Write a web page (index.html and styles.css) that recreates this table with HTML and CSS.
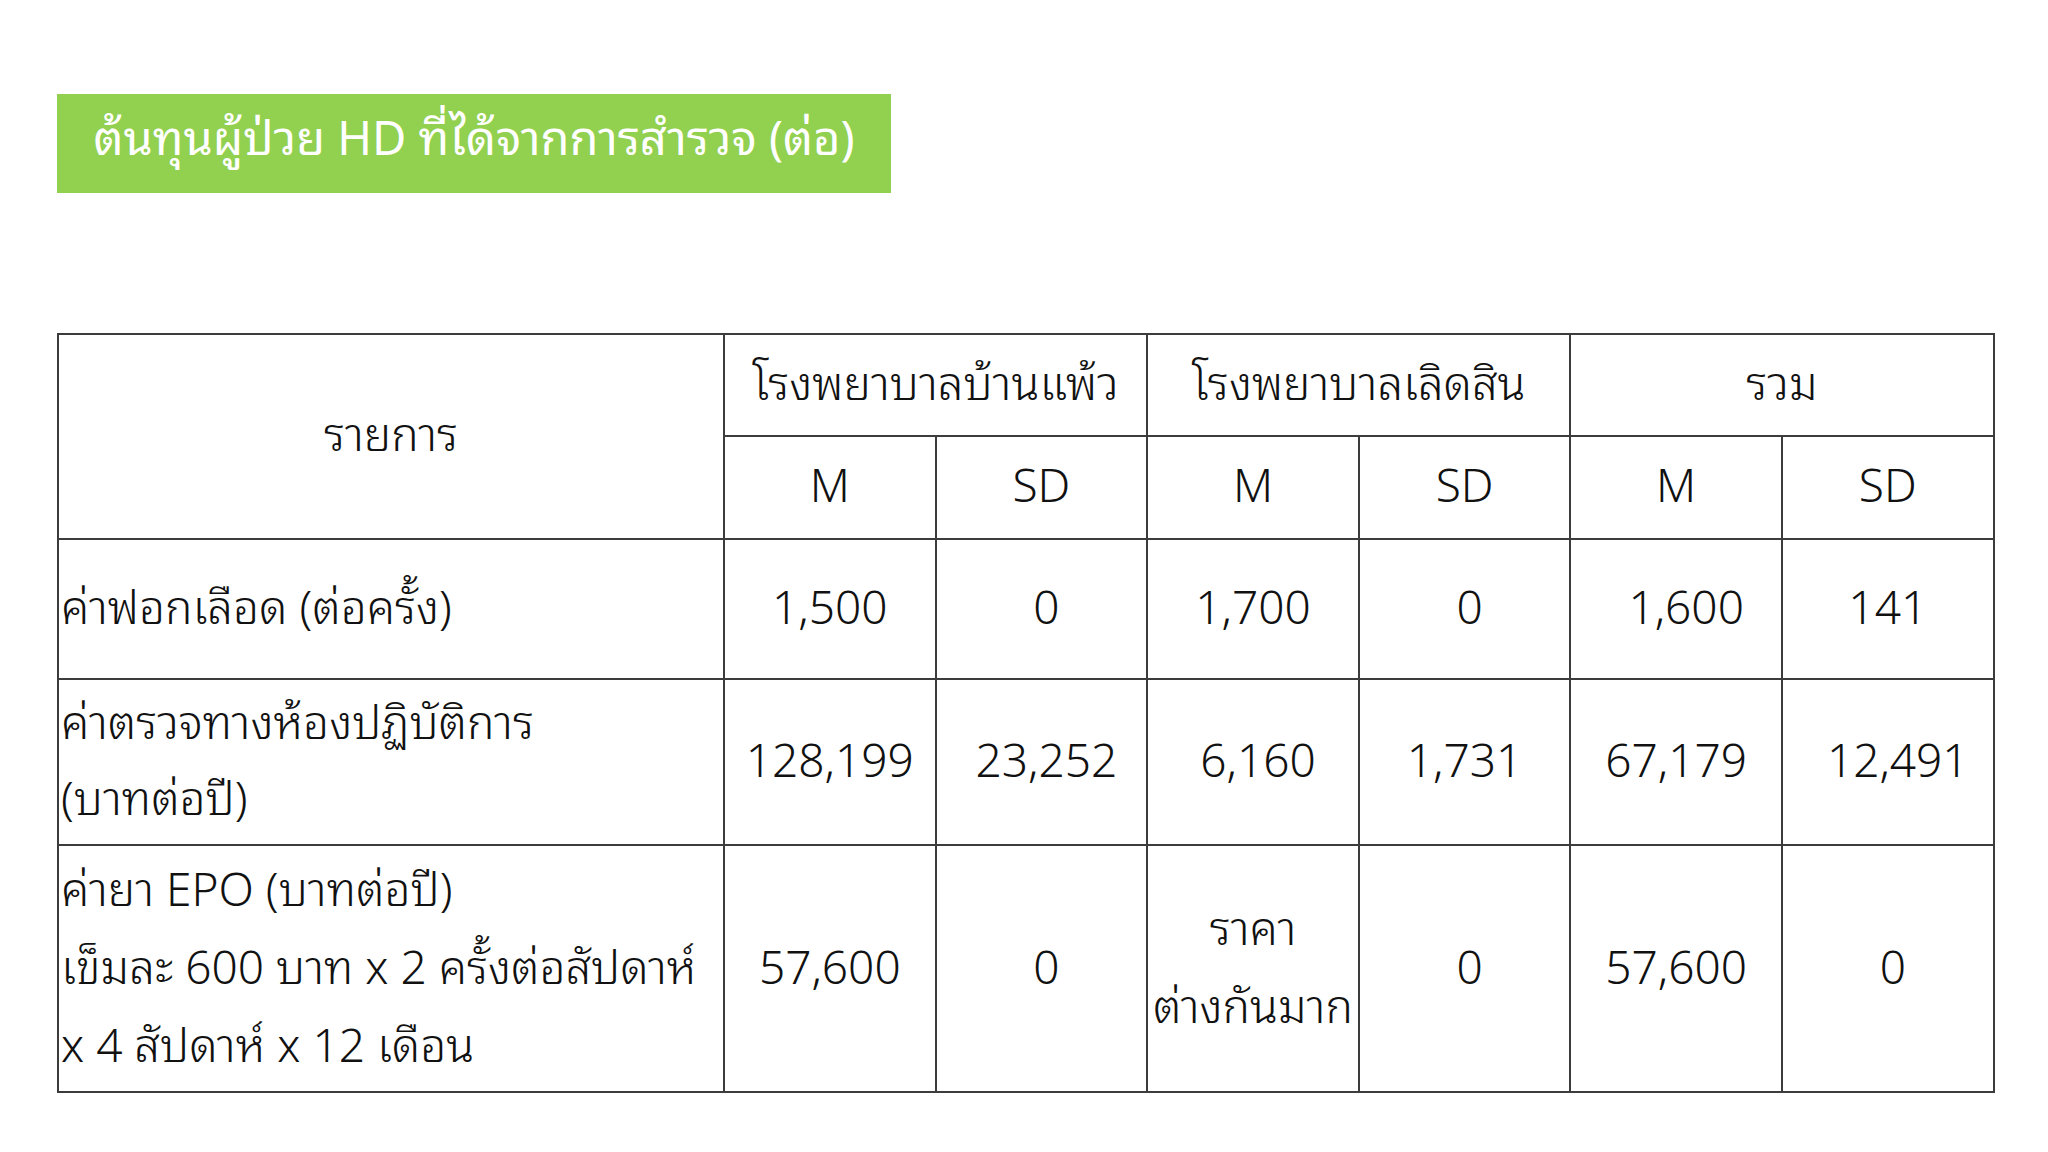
FILE: index.html
```html
<!DOCTYPE html>
<html lang="th">
<head>
<meta charset="utf-8">
<title>ต้นทุนผู้ป่วย HD ที่ได้จากการสำรวจ (ต่อ)</title>
<link rel="stylesheet" href="styles.css">
</head>
<body>
<div class="slide">
  <div class="title">ต้นทุนผู้ป่วย HD ที่ได้จากการสำรวจ (ต่อ)</div>
  <table class="cost">
    <colgroup>
      <col class="c-item">
      <col class="c-val"><col class="c-val"><col class="c-val"><col class="c-val"><col class="c-val"><col class="c-val">
    </colgroup>
    <tr class="r-h1">
      <td rowspan="2" class="center">รายการ</td>
      <td colspan="2" class="center">โรงพยาบาลบ้านแพ้ว</td>
      <td colspan="2" class="center">โรงพยาบาลเลิดสิน</td>
      <td colspan="2" class="center">รวม</td>
    </tr>
    <tr class="r-h2">
      <td class="center">M</td><td class="center">SD</td>
      <td class="center">M</td><td class="center">SD</td>
      <td class="center">M</td><td class="center">SD</td>
    </tr>
    <tr class="r-1">
      <td class="item">ค่าฟอกเลือด (ต่อครั้ง)</td>
      <td class="center">1,500</td>
      <td class="center nudge">0</td>
      <td class="center">1,700</td>
      <td class="center nudge">0</td>
      <td class="center nudge2">1,600</td>
      <td class="center">141</td>
    </tr>
    <tr class="r-2">
      <td class="item">ค่าตรวจทางห้องปฏิบัติการ<br>(บาทต่อปี)</td>
      <td class="center">128,199</td>
      <td class="center nudge">23,252</td>
      <td class="center nudge">6,160</td>
      <td class="center">1,731</td>
      <td class="center">67,179</td>
      <td class="center nudge2">12,491</td>
    </tr>
    <tr class="r-3">
      <td class="item">ค่ายา EPO (บาทต่อปี)<br>เข็มละ 600 บาท x 2 ครั้งต่อสัปดาห์<br>x 4 สัปดาห์ x 12 เดือน</td>
      <td class="center">57,600</td>
      <td class="center nudge">0</td>
      <td class="center">ราคา<br>ต่างกันมาก</td>
      <td class="center nudge">0</td>
      <td class="center">57,600</td>
      <td class="center nudge">0</td>
    </tr>
  </table>
</div>
</body>
</html>
```

FILE: styles.css
```css
html, body {
  margin: 0;
  padding: 0;
  background: #ffffff;
}

.slide {
  width: 2048px;
  height: 1152px;
  box-sizing: border-box;
  padding: 94px 0 0 57px;
  font-family: "Noto Sans Thai Looped", "Noto Sans Thai", "Liberation Sans", "DejaVu Sans", sans-serif;
  color: #111111;
}

.title {
  width: 834px;
  height: 99px;
  box-sizing: border-box;
  padding-bottom: 20px;
  background: #92d050;
  color: #ffffff;
  font-size: 47px;
  line-height: 79px;
  text-align: center;
  white-space: nowrap;
}

.cost {
  margin-top: 140px;
  border-collapse: collapse;
  table-layout: fixed;
  width: 1936px;
  font-size: 46px;
  font-weight: 300;
  line-height: 78px;
}

.c-item { width: 666px; }
.c-val { width: 211.6px; }

.cost td {
  border: 2px solid #3c3c3c;
  padding: 0 2px 13px 2px;
  vertical-align: middle;
  white-space: nowrap;
}

.cost .r-2 td {
  line-height: 76px;
  padding-bottom: 12px;
}

.cost .r-3 td {
  padding-bottom: 11px;
}

.cost td.center { text-align: center; }
.cost td.item { text-align: left; }
.cost td.nudge { padding-left: 12px; }
.cost td.nudge2 { padding-left: 22px; }

.r-h1 { height: 102px; }
.r-h2 { height: 103px; }
.r-1 { height: 140px; }
.r-2 { height: 166px; }
.r-3 { height: 247px; }
```
